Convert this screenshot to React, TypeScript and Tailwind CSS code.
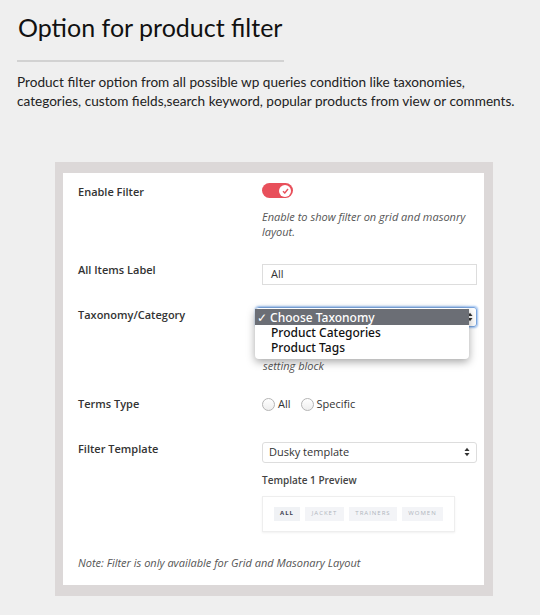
import React from "react";

function Label({ children }: { children: React.ReactNode }) {
  return <div className="w-[184px] shrink-0 text-[11px] font-semibold text-[#333] leading-[15px]">{children}</div>;
}

function Desc({ children }: { children: React.ReactNode }) {
  return <p className="text-[11px] italic text-[#555] leading-[15px]">{children}</p>;
}

function Chevrons() {
  return (
    <svg width="6" height="10" viewBox="0 0 6 10" className="text-[#333]">
      <path d="M0.5 4 L3 0.8 L5.5 4 Z" fill="currentColor" />
      <path d="M0.5 6 L3 9.2 L5.5 6 Z" fill="currentColor" />
    </svg>
  );
}

function Radio({ label }: { label: string }) {
  return (
    <label className="flex items-center gap-[3px] text-[11px] text-[#333]">
      <span className="w-[13px] h-[13px] rounded-full border border-[#b5b5b5] bg-gradient-to-b from-white to-[#eee]" />
      {label}
    </label>
  );
}

export default function App() {
  return (
    <div className="w-[540px] h-[615px] bg-[#efefef] overflow-hidden" style={{ fontFamily: '"Open Sans", "Noto Sans", sans-serif' }}>
      {/* Header */}
      <div className="pl-[17px] pt-[10px]" style={{ fontFamily: 'Lato, "Open Sans", sans-serif' }}>
        <h1 className="text-[25px] leading-[34px] text-[#111] pl-[1px]">Option for product filter</h1>
        <div className="w-[267px] h-[2px] bg-[#d2d2d2] mt-[16px]" />
        <p className="mt-[11px] text-[13.6px] leading-[19px] text-[#222]">
          Product filter option from all possible wp queries condition like taxonomies,
          <br />
          categories, custom fields,search keyword, popular products from view or comments.
        </p>
      </div>

      {/* Settings panel */}
      <div className="ml-[55px] mt-[51px] w-[438px] h-[434px] bg-[#dcd8d8] pl-[8px] pr-[9px] pt-[11px] pb-[11px]">
        <div className="h-full bg-white pl-[15px] pr-[7px] pt-[11px]">
          {/* Enable Filter */}
          <div className="flex">
            <Label>Enable Filter</Label>
            <div className="flex-1">
              <div className="w-[31px] h-[15px] rounded-full bg-[#e8505b] flex items-center justify-end pr-[2px] -mt-[1px]">
                <span className="w-[12px] h-[12px] rounded-full bg-white flex items-center justify-center">
                  <svg width="7" height="6" viewBox="0 0 7 6">
                    <path d="M1 3.2 L2.8 5 L6 1" stroke="#e8505b" strokeWidth="1.4" fill="none" />
                  </svg>
                </span>
              </div>
              <div className="mt-[11px]">
                <Desc>
                  Enable to show filter on grid and masonry
                  <br />
                  layout.
                </Desc>
              </div>
            </div>
          </div>

          {/* All Items Label */}
          <div className="flex mt-[23px]">
            <Label>All Items Label</Label>
            <div className="flex-1 mt-[2px]">
              <div className="h-[21px] border border-[#ddd] px-[8px] flex items-center text-[11px] text-[#333]">All</div>
            </div>
          </div>

          {/* Taxonomy */}
          <div className="flex mt-[22px]">
            <Label>Taxonomy/Category</Label>
            <div className="flex-1 relative -ml-[6px]">
              <div className="h-[20px] border border-[#7ba7e0] rounded-[3px] shadow-[0_0_2px_1px_#9cc0f0] flex items-center justify-end pr-[3px]">
                <Chevrons />
              </div>
              <div className="pl-[7px] mt-[1px]">
                <Desc>
                  Post type taxonomy will be listed
                  <br />
                  according to post type selected in post
                  <br />
                  setting block
                </Desc>
              </div>
              {/* open dropdown menu */}
              <div className="absolute left-[-1px] top-[1px] w-[214px] bg-white rounded-[4px] shadow-[0_3px_8px_rgba(0,0,0,0.35)] pt-[1px] pb-[4px] text-[12px] font-medium text-[#111] leading-[15px]" style={{ fontFamily: '"Noto Sans", "Open Sans", sans-serif' }}>
                <div className="bg-[#6b6e75] text-white pl-[2px] h-[16px] flex items-center">✓ Choose Taxonomy</div>
                <div className="pl-[16px]">Product Categories</div>
                <div className="pl-[16px]">Product Tags</div>
              </div>
            </div>
          </div>

          {/* Terms Type */}
          <div className="flex mt-[23px]">
            <Label>Terms Type</Label>
            <div className="flex-1 flex items-center gap-[10px]">
              <Radio label="All" />
              <Radio label="Specific" />
            </div>
          </div>

          {/* Filter Template */}
          <div className="flex mt-[28px]">
            <Label>Filter Template</Label>
            <div className="flex-1 mt-[1px]">
              <div className="h-[21px] border border-[#ddd] rounded-[3px] px-[6px] flex items-center justify-between text-[11px] text-[#333]">
                Dusky template
                <Chevrons />
              </div>
              <div className="mt-[10px] text-[10px] font-semibold text-[#444]">Template 1 Preview</div>
              <div className="mt-[8px] w-[193px] h-[36px] border border-[#eee] shadow-[0_1px_2px_rgba(0,0,0,0.06)] flex items-center gap-[5px] pl-[11px]">
                <span className="w-[26px] h-[14px] bg-[#f0f2f5] text-[6px] font-bold tracking-[1px] text-[#3c3f50] flex items-center justify-center">ALL</span>
                <span className="w-[39px] h-[14px] bg-[#f3f4f7] text-[6px] tracking-[1px] text-[#b0b4bd] flex items-center justify-center">JACKET</span>
                <span className="w-[48px] h-[14px] bg-[#f3f4f7] text-[6px] tracking-[1px] text-[#b0b4bd] flex items-center justify-center">TRAINERS</span>
                <span className="w-[41px] h-[14px] bg-[#f3f4f7] text-[6px] tracking-[1px] text-[#b0b4bd] flex items-center justify-center">WOMEN</span>
              </div>
            </div>
          </div>

          <div className="mt-[23px]">
            <Desc>Note: Filter is only available for Grid and Masonary Layout</Desc>
          </div>
        </div>
      </div>
    </div>
  );
}
